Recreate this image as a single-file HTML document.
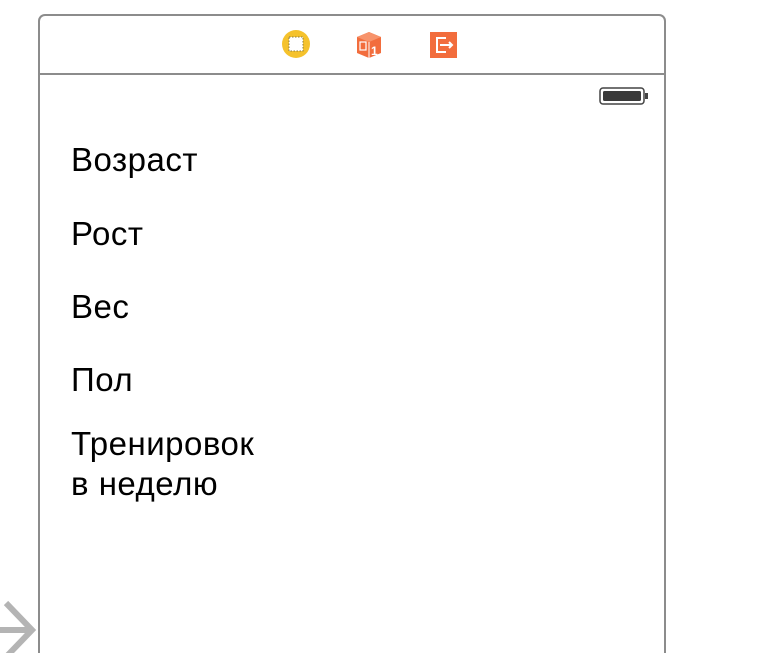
<!DOCTYPE html>
<html><head><meta charset="utf-8"><style>
html,body{margin:0;width:760px;height:653px;overflow:hidden}
body{background:#fff;position:relative;font-family:"Liberation Sans",Arial,sans-serif}
.frame{position:absolute;left:38px;top:14px;width:628px;height:639px;border:2px solid #8c8c8c;border-bottom:none;border-radius:7px 7px 0 0;box-sizing:border-box}
.hdr{position:absolute;left:38px;top:73px;width:628px;height:2px;background:#8c8c8c}
.t{position:absolute;left:71px;font-size:33px;letter-spacing:0.5px;color:#000;line-height:1}
</style></head><body>
<div class="frame"></div>
<div class="hdr"></div>
<svg style="position:absolute;left:280px;top:28px" width="180" height="36">
<circle cx="16" cy="16" r="14" fill="#f5c22c"/>
<rect x="9" y="9" width="14" height="14" fill="#fff" stroke="#8a7a3a" stroke-width="1" stroke-dasharray="1.5 1.5"/>
<polygon points="89,4 101,9 101,25 89,30 77,25 77,9" fill="#f26d3d"/>
<polygon points="89,4 101,9 89,14 77,9" fill="#f7936b"/>
<line x1="89" y1="14" x2="89" y2="30" stroke="#fff" stroke-width="1"/>
<rect x="80" y="14" width="6" height="8" fill="none" stroke="#fff" stroke-width="1.2"/>
<text x="91" y="27" font-size="12" font-weight="bold" fill="#fff" font-family="Liberation Sans">1</text>
<rect x="150" y="4" width="27" height="26" fill="#f26d3d"/>
<path d="M166 10 H157 V24 H166 M160 17 H172 M169 14 L172 17 L169 20" fill="none" stroke="#fff" stroke-width="2"/>
</svg>
<svg style="position:absolute;left:598px;top:86px" width="52" height="20">
<rect x="2" y="2" width="44" height="16" rx="3" fill="#fff" stroke="#444" stroke-width="1.5"/>
<rect x="5" y="5" width="38" height="10" rx="1.5" fill="#3a3a3a"/>
<rect x="47" y="7" width="3" height="6" fill="#444"/>
</svg>
<div class="t" style="top:143px">Возраст</div>
<div class="t" style="top:217px">Рост</div>
<div class="t" style="top:290px">Вес</div>
<div class="t" style="top:363px">Пол</div>
<div class="t" style="line-height:40px;top:424px">Тренировок<br>в неделю</div>
<svg style="position:absolute;left:0;top:595px" width="40" height="58">
<path d="M0 35 H30 M6 8 L32 35 L6 62" fill="none" stroke="#b4b4b4" stroke-width="6"/>
</svg>
</body></html>
